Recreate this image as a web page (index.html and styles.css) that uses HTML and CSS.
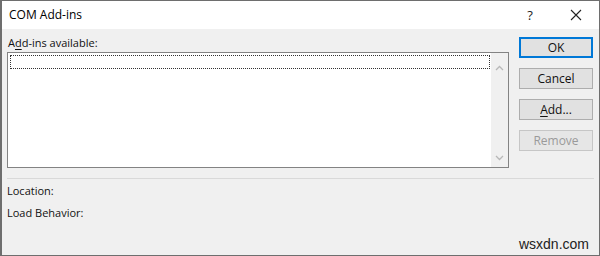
FILE: index.html
```html
<!DOCTYPE html>
<html>
<head>
<meta charset="utf-8">
<link rel="stylesheet" href="styles.css">
</head>
<body>
<div class="window">
  <div class="titlebar">
    <span class="title">COM Add-ins</span>
    <div class="controls">
      <span class="help">?</span>
      <span class="close">
        <svg width="12" height="12" viewBox="0 0 12 12"><path d="M1 1L11 11M11 1L1 11" stroke="#222" stroke-width="1.1" fill="none"/></svg>
      </span>
    </div>
  </div>
  <div class="body">
    <div class="top">
      <div class="left">
        <div class="label">A<u>d</u>d-ins available:</div>
        <div class="listbox">
          <div class="items"><div class="focusrow"></div></div>
          <div class="scrollbar">
            <svg width="9" height="6" viewBox="0 0 9 6"><path d="M1 5L4.5 1.5L8 5" stroke="#b8b8b8" stroke-width="1.3" fill="none"/></svg>
            <svg width="9" height="6" viewBox="0 0 9 6"><path d="M1 1L4.5 4.5L8 1" stroke="#b8b8b8" stroke-width="1.3" fill="none"/></svg>
          </div>
        </div>
      </div>
      <div class="buttons">
        <div class="btn default">OK</div>
        <div class="btn">Cancel</div>
        <div class="btn spaced"><u>A</u>dd...</div>
        <div class="btn disabled">Remove</div>
      </div>
    </div>
    <div class="sep"></div>
    <div class="info">
      <div class="row">Location:</div>
      <div class="row">Load Behavior:</div>
    </div>
  </div>
  <div class="watermark">wsxdn.com</div>
</div>
</body>
</html>
```
FILE: styles.css
```css
html, body {
  margin: 0;
  padding: 0;
}
body {
  width: 600px;
  height: 256px;
  overflow: hidden;
  font-family: "Open Sans", "Noto Sans", sans-serif;
  font-size: 12px;
  color: #000;
}
.window {
  position: relative;
  box-sizing: border-box;
  width: 600px;
  height: 256px;
  border: 1px solid #6e6e6e;
  border-left-width: 2px;
  background: #f0f0f0;
  display: flex;
  flex-direction: column;
}
.titlebar {
  height: 28px;
  background: #fff;
  display: flex;
  align-items: center;
  justify-content: space-between;
  flex-shrink: 0;
}
.title {
  padding-left: 7px;
  font-size: 12px;
  color: #000;
  line-height: 16px;
}
.controls {
  display: flex;
  align-items: center;
  height: 100%;
}
.help {
  width: 46px;
  text-align: center;
  font-size: 13px;
  color: #222;
}
.close {
  width: 46px;
  display: flex;
  justify-content: center;
  align-items: center;
}
.body {
  flex: 1;
  display: flex;
  flex-direction: column;
}
.top {
  display: flex;
  padding-left: 5px;
}
.left {
  display: flex;
  flex-direction: column;
  width: 502px;
}
.label {
  height: 16px;
  line-height: 16px;
  margin-top: 6px;
  margin-bottom: 1px;
  padding-left: 1px;
  font-size: 11px;
  color: #111;
}
.label u, .btn u {
  text-decoration-thickness: 1px;
  text-underline-offset: 2px;
}
.listbox {
  box-sizing: border-box;
  height: 116px;
  border: 1px solid #838383;
  background: #fff;
  display: flex;
}
.items {
  flex: 1;
  padding: 2px 1px 0 2px;
}
.focusrow {
  height: 12px;
  border: 1px dotted #333;
}
.scrollbar {
  width: 17px;
  background: #f0f0f0;
  display: flex;
  flex-direction: column;
  justify-content: space-between;
  align-items: center;
  padding: 12px 0 6px;
  box-sizing: border-box;
}
.buttons {
  display: flex;
  flex-direction: column;
  gap: 10px;
  margin-left: 10px;
  margin-top: 8px;
}
.btn {
  box-sizing: border-box;
  width: 74px;
  height: 21px;
  border: 1px solid #adadad;
  background: #e1e1e1;
  text-align: center;
  line-height: 19px;
  font-size: 12px;
  color: #111;
}
.btn.default {
  border: 2px solid #0078d7;
  line-height: 17px;
}
.btn.disabled {
  color: #9a9a9a;
  border-color: #c6c6c6;
  background: #e6e6e6;
}
.sep {
  height: 1px;
  background: #d9d9d9;
  margin: 10px 5px 0 5px;
}
.info {
  padding-left: 5px;
  padding-top: 4px;
  display: flex;
  flex-direction: column;
  gap: 6px;
  font-size: 11px;
  color: #111;
}
.row {
  height: 16px;
  line-height: 16px;
}
.watermark {
  position: absolute;
  right: 10px;
  bottom: 3px;
  font-family: "Liberation Sans", Arial, sans-serif;
  font-size: 14px;
  color: #222;
}
```
